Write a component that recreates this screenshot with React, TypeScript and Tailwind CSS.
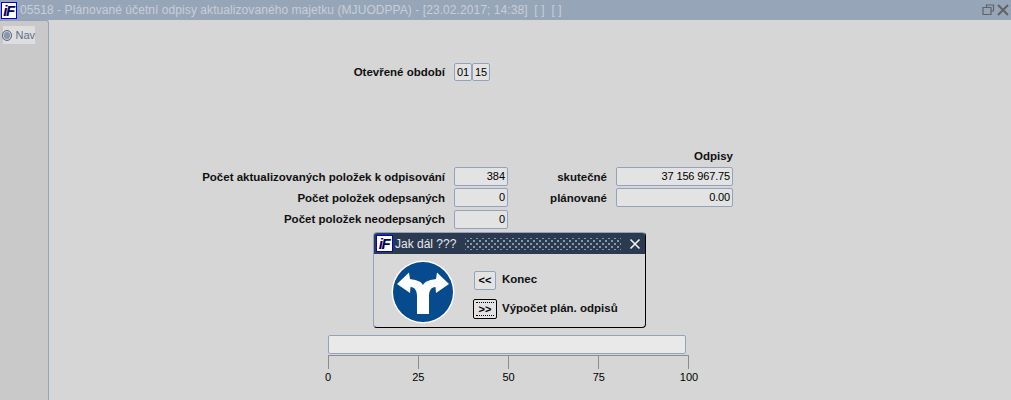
const fieldBox = 'border border-[#94a3bb] rounded-[2px] bg-[#e3e3e3] h-[19px] flex items-center justify-end pr-[2px] text-[11px] text-black';

function Logo({ size }: { size: string }) {
  return (
    <div className={`${size} bg-white border border-[#0000e0] flex items-center justify-center overflow-hidden shrink-0`}>
      <span className="font-['Liberation_Sans',sans-serif] font-bold italic text-[15px] leading-none text-[#00005c] tracking-[-1.5px] pr-[1px]">iF</span>
    </div>
  );
}

function Row({ label, value, side, sideValue, h, lead }: { label: string; value: string; side?: string; sideValue?: string; h: string; lead: string }) {
  return (
    <div className={`flex ${h}`}>
      <div className={`w-[397px] pr-[1px] text-right font-bold ${lead}`}>{label}</div>
      <div className={`${fieldBox} w-[54px] ml-[8px]`}>{value}</div>
      {side && <div className={`w-[99px] text-right font-bold ${lead}`}>{side}</div>}
      {side && <div className={`${fieldBox} w-[117px] ml-[9px] tracking-[-0.15px]`}>{sideValue}</div>}
    </div>
  );
}

function Dialog() {
  return (
    <div className="absolute left-[324px] top-[212px] w-[273px] h-[96px] bg-[#d8d8d8] border border-[#94a3bb] border-r-black border-b-black rounded-[4px] overflow-hidden">
      <div className="h-[21px] bg-[#2b3a50] flex items-center pl-[2px] pr-[4px]">
        <Logo size="w-[17px] h-[17px]" />
        <span className="ml-[2px] text-[12px] text-[#e6e9ee]">Jak dál ???</span>
        <div className="ml-[9px] w-[156px] h-[12px] bg-[radial-gradient(circle,#8b96a6_1px,transparent_1px),radial-gradient(circle,#8b96a6_1px,transparent_1px)] bg-[length:6px_6px] bg-[position:0_0,3px_3px]" />
        <svg width="12" height="12" viewBox="0 0 12 12" className="ml-auto">
          <path d="M1.5 1.5L10.5 10.5M10.5 1.5L1.5 10.5" stroke="#f2f2f2" strokeWidth="1.6" />
        </svg>
      </div>
      <div className="flex pl-[17px] pt-[6px]">
        <svg width="64" height="64" viewBox="0 0 64 64" className="shrink-0">
          <circle cx="32" cy="32" r="31.5" fill="#ffffff" />
          <circle cx="32" cy="32" r="30" fill="#064b8e" />
          <path d="M6 24L18 12.5L19 19C25 20 30 21 32 25C34 21 39 20 45 19L46 12.5L58 24L45 33L44.5 27C40 27 38 31 38 36V54H26V36C26 31 24 27 19.5 27L19 33Z" fill="#ffffff" />
        </svg>
        <div className="ml-[18px] flex flex-col">
          <div className="flex items-center h-[20px] mt-[10px]">
            <div className="ml-[1px] w-[22px] h-[19px] border border-[#94a3bb] rounded-[2px] bg-[#e3e3e3] text-center text-[11px] font-bold leading-[16px] text-black">&lt;&lt;</div>
            <span className="ml-[6px] font-bold">Konec</span>
          </div>
          <div className="flex items-center h-[21px] mt-[8px]">
            <div className="w-[24px] h-[20px] border border-black rounded-[2px] bg-[#e3e3e3] p-[2px]">
              <div className="h-full border-y border-dotted border-black text-center text-[11px] font-bold leading-[12px] text-black">&gt;&gt;</div>
            </div>
            <span className="ml-[5px] font-bold">Výpočet plán. odpisů</span>
          </div>
        </div>
      </div>
    </div>
  );
}

function Scale() {
  const marks = [0, 25, 50, 75, 100];
  return (
    <div className="ml-[279px] mt-[1px] w-[361px]">
      <div className="h-[14px] border-t-1 border-[#8c8c8c] flex justify-between">
        {marks.map((m) => (
          <div key={m} className="w-[1px] h-[13px] bg-[#8c8c8c]" />
        ))}
      </div>
      <div className="flex justify-between mt-[1px] -mx-[15px] text-[11px] leading-[14px] text-black">
        {marks.map((m) => (
          <span key={m} className="w-[30px] text-center">{m}</span>
        ))}
      </div>
    </div>
  );
}

export default function App() {
  return (
    <div className="w-[1011px] h-[400px] bg-[#d6d6d6] overflow-hidden flex flex-col font-['Liberation_Sans',sans-serif] text-[11.5px] text-[#101010]">
      <header className="h-[20px] bg-[#97a5b9] flex items-center pl-[1px] pr-[2px] shrink-0">
        <Logo size="w-[16px] h-[17px]" />
        <span className="ml-[3px] text-[12px] text-[#c8ced8] tracking-[0.07px] whitespace-pre">05518 - Plánované účetní odpisy aktualizovaného majetku (MJUODPPA) - [23.02.2017; 14:38]  [ ]  [ ]</span>
        <svg width="13" height="12" viewBox="0 0 13 12" className="ml-auto">
          <path d="M4.5 3V1H11.5V7H9M1 3.5H9V10.5H1Z" fill="none" stroke="#5f6266" strokeWidth="1.2" />
        </svg>
        <svg width="12" height="12" viewBox="0 0 12 12" className="ml-[2px]">
          <path d="M1 1L11 11M11 1L1 11" stroke="#5f6266" strokeWidth="2" />
        </svg>
      </header>
      <div className="flex flex-1 min-h-0">
        <aside className="w-[49px] bg-[#c9c9c9] border-r border-t border-[#94a3bb] rounded-tr-[3px] pl-[3px] pt-[5px] shrink-0">
          <div className="flex items-center w-[32px] h-[18px] bg-[#dedede] text-[11px] text-[#5f6f86]">
            <span className="-ml-[1px] w-[11px] h-[11px] rounded-full border border-[#5f6f86] bg-[#8a97ab] ring-1 ring-inset ring-[#c9ced6] mr-[3px]" />
            Nav
          </div>
        </aside>
        <main className="relative flex-1 pt-[43px]">
          <div className="flex h-[18px]">
            <div className="w-[397px] pr-[1px] text-right font-bold leading-[18px]">Otevřené období</div>
            <div className="ml-[8px] w-[18px] border border-[#94a3bb] rounded-[2px] bg-[#e3e3e3] text-center text-[11px] leading-[16px] text-black">01</div>
            <div className="w-[18px] border border-[#94a3bb] rounded-[2px] bg-[#e3e3e3] text-center text-[11px] leading-[16px] text-black">15</div>
          </div>
          <div className="mt-[68px] w-[684px] text-right font-bold leading-[14px] h-[18px]">Odpisy</div>
          <Row label="Počet aktualizovaných položek k odpisování" value="384" side="skutečné" sideValue="37 156 967.75" h="h-[21px]" lead="leading-[20px]" />
          <Row label="Počet položek odepsaných" value="0" side="plánované" sideValue="0.00" h="h-[22px]" lead="leading-[20px]" />
          <Row label="Počet položek neodepsaných" value="0" h="h-[19px]" lead="leading-[19px]" />
          <div className="ml-[279px] mt-[106px] w-[358px] h-[19px] border border-[#94a3bb] rounded-[2px] bg-[#e9e9e9]" />
          <Scale />
          <Dialog />
        </main>
      </div>
    </div>
  );
}
